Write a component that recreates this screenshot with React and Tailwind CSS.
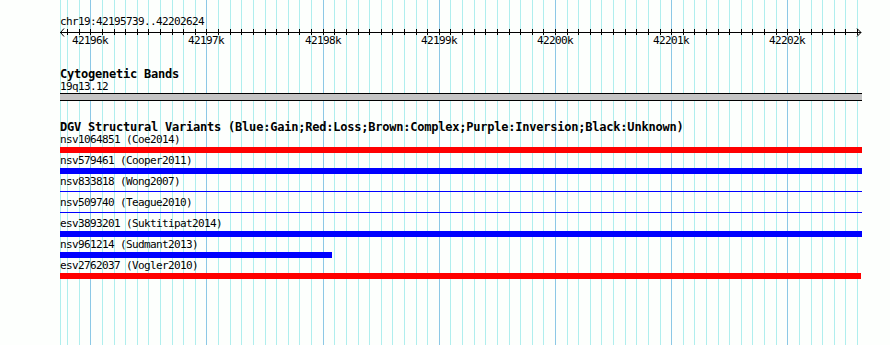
import React from 'react';

const START = 42195739;
const END = 42202624;
const SCALE = 0.11617; // px per bp
const LEFT = 60;

const toX = (pos) => Math.round((pos - START) * SCALE);

const ticks = [];
for (let p = 42195800; p <= 42202600; p += 100) {
  ticks.push({ p, x: toX(p), major: p % 1000 === 0 });
}

const variants = [
  { id: 'nsv1064851', src: 'Coe2014', color: 'red', kind: 'bar' },
  { id: 'nsv579461', src: 'Cooper2011', color: 'blue', kind: 'bar' },
  { id: 'nsv833818', src: 'Wong2007', color: 'blue', kind: 'line' },
  { id: 'nsv509740', src: 'Teague2010', color: 'blue', kind: 'line' },
  { id: 'esv3893201', src: 'Suktitipat2014', color: 'blue', kind: 'bar' },
  { id: 'nsv961214', src: 'Sudmant2013', color: 'blue', kind: 'bar', width: 272 },
  { id: 'esv2762037', src: 'Vogler2010', color: 'red', kind: 'bar', width: 801 },
];

const mono = { fontFamily: '"DejaVu Sans Mono", "Liberation Mono", monospace' };

const GridLines = () => (
  <svg className="absolute inset-0" width="890" height="345" shapeRendering="crispEdges">
    <line x1={LEFT + 0.5} y1="0" x2={LEFT + 0.5} y2="345" stroke="#afeeee" />
    {ticks.map((t) => (
      <line
        key={t.p}
        x1={LEFT + t.x + 0.5}
        y1="0"
        x2={LEFT + t.x + 0.5}
        y2="345"
        stroke={t.major ? '#8cc8e6' : '#afeeee'}
      />
    ))}
  </svg>
);

// ruler svg starts at page y=28; axis sits at y=32
const Ruler = () => (
  <svg width="802" height="20" className="block overflow-visible" shapeRendering="crispEdges">
    <line x1="0" y1="4.5" x2="801" y2="4.5" stroke="black" />
    <polyline points="4,0.5 0.5,4.5 4,8.5" fill="none" stroke="black" shapeRendering="auto" />
    <polyline points="797,0.5 801,4.5 797,8.5" fill="none" stroke="black" shapeRendering="auto" />
    {ticks.map((t) => (
      <line key={t.p} x1={t.x + 0.5} y1="1" x2={t.x + 0.5} y2="7" stroke="black" />
    ))}
    {ticks
      .filter((t) => t.major)
      .map((t) => (
        <text
          key={t.p}
          x={t.x}
          y="15.5"
          textAnchor="middle"
          fontSize="11"
          letterSpacing="-0.62"
          fill="black"
          style={mono}
        >
          {`${t.p / 1000}k`}
        </text>
      ))}
  </svg>
);

const VariantRow = ({ v }) => (
  <div className="h-[21px]">
    <div className="text-[11px] leading-[13px] tracking-[-0.62px] text-black whitespace-nowrap">
      {v.id} ({v.src})
    </div>
    <div className="mt-[1px] h-[6px] flex flex-col">
      {v.kind === 'bar' ? (
        <div
          className={v.color === 'red' ? 'h-[6px] bg-[#ff0000]' : 'h-[6px] bg-[#0000ff]'}
          style={{ width: v.width || 802 }}
        />
      ) : (
        <div className="mt-[2px] h-px w-[802px] bg-[#0000ff]" />
      )}
    </div>
  </div>
);

export default function App() {
  return (
    <div className="relative w-[890px] h-[345px] overflow-hidden bg-[#fdfffd]" style={mono}>
      <GridLines />
      <div className="relative flex flex-col pl-[60px] w-[862px]">
        <div className="mt-[15px] text-[11px] leading-[13px] tracking-[-0.62px] text-black">
          chr19:{START}..{END}
        </div>
        <Ruler />

        <div className="mt-[20px] text-[12px] leading-[12px] font-bold tracking-[-0.22px] text-black">
          Cytogenetic Bands
        </div>
        <div className="mt-[1px] text-[11px] leading-[12px] tracking-[-0.62px] text-black">19q13.12</div>
        <div className="h-[8px] w-[802px] border-y border-black bg-[#c4c4c4]" />

        <div className="mt-[20px] text-[12px] leading-[12px] font-bold tracking-[-0.22px] text-black whitespace-nowrap">
          DGV Structural Variants (Blue:Gain;Red:Loss;Brown:Complex;Purple:Inversion;Black:Unknown)
        </div>
        <div className="flex flex-col">
          {variants.map((v) => (
            <VariantRow key={v.id} v={v} />
          ))}
        </div>
      </div>
    </div>
  );
}
